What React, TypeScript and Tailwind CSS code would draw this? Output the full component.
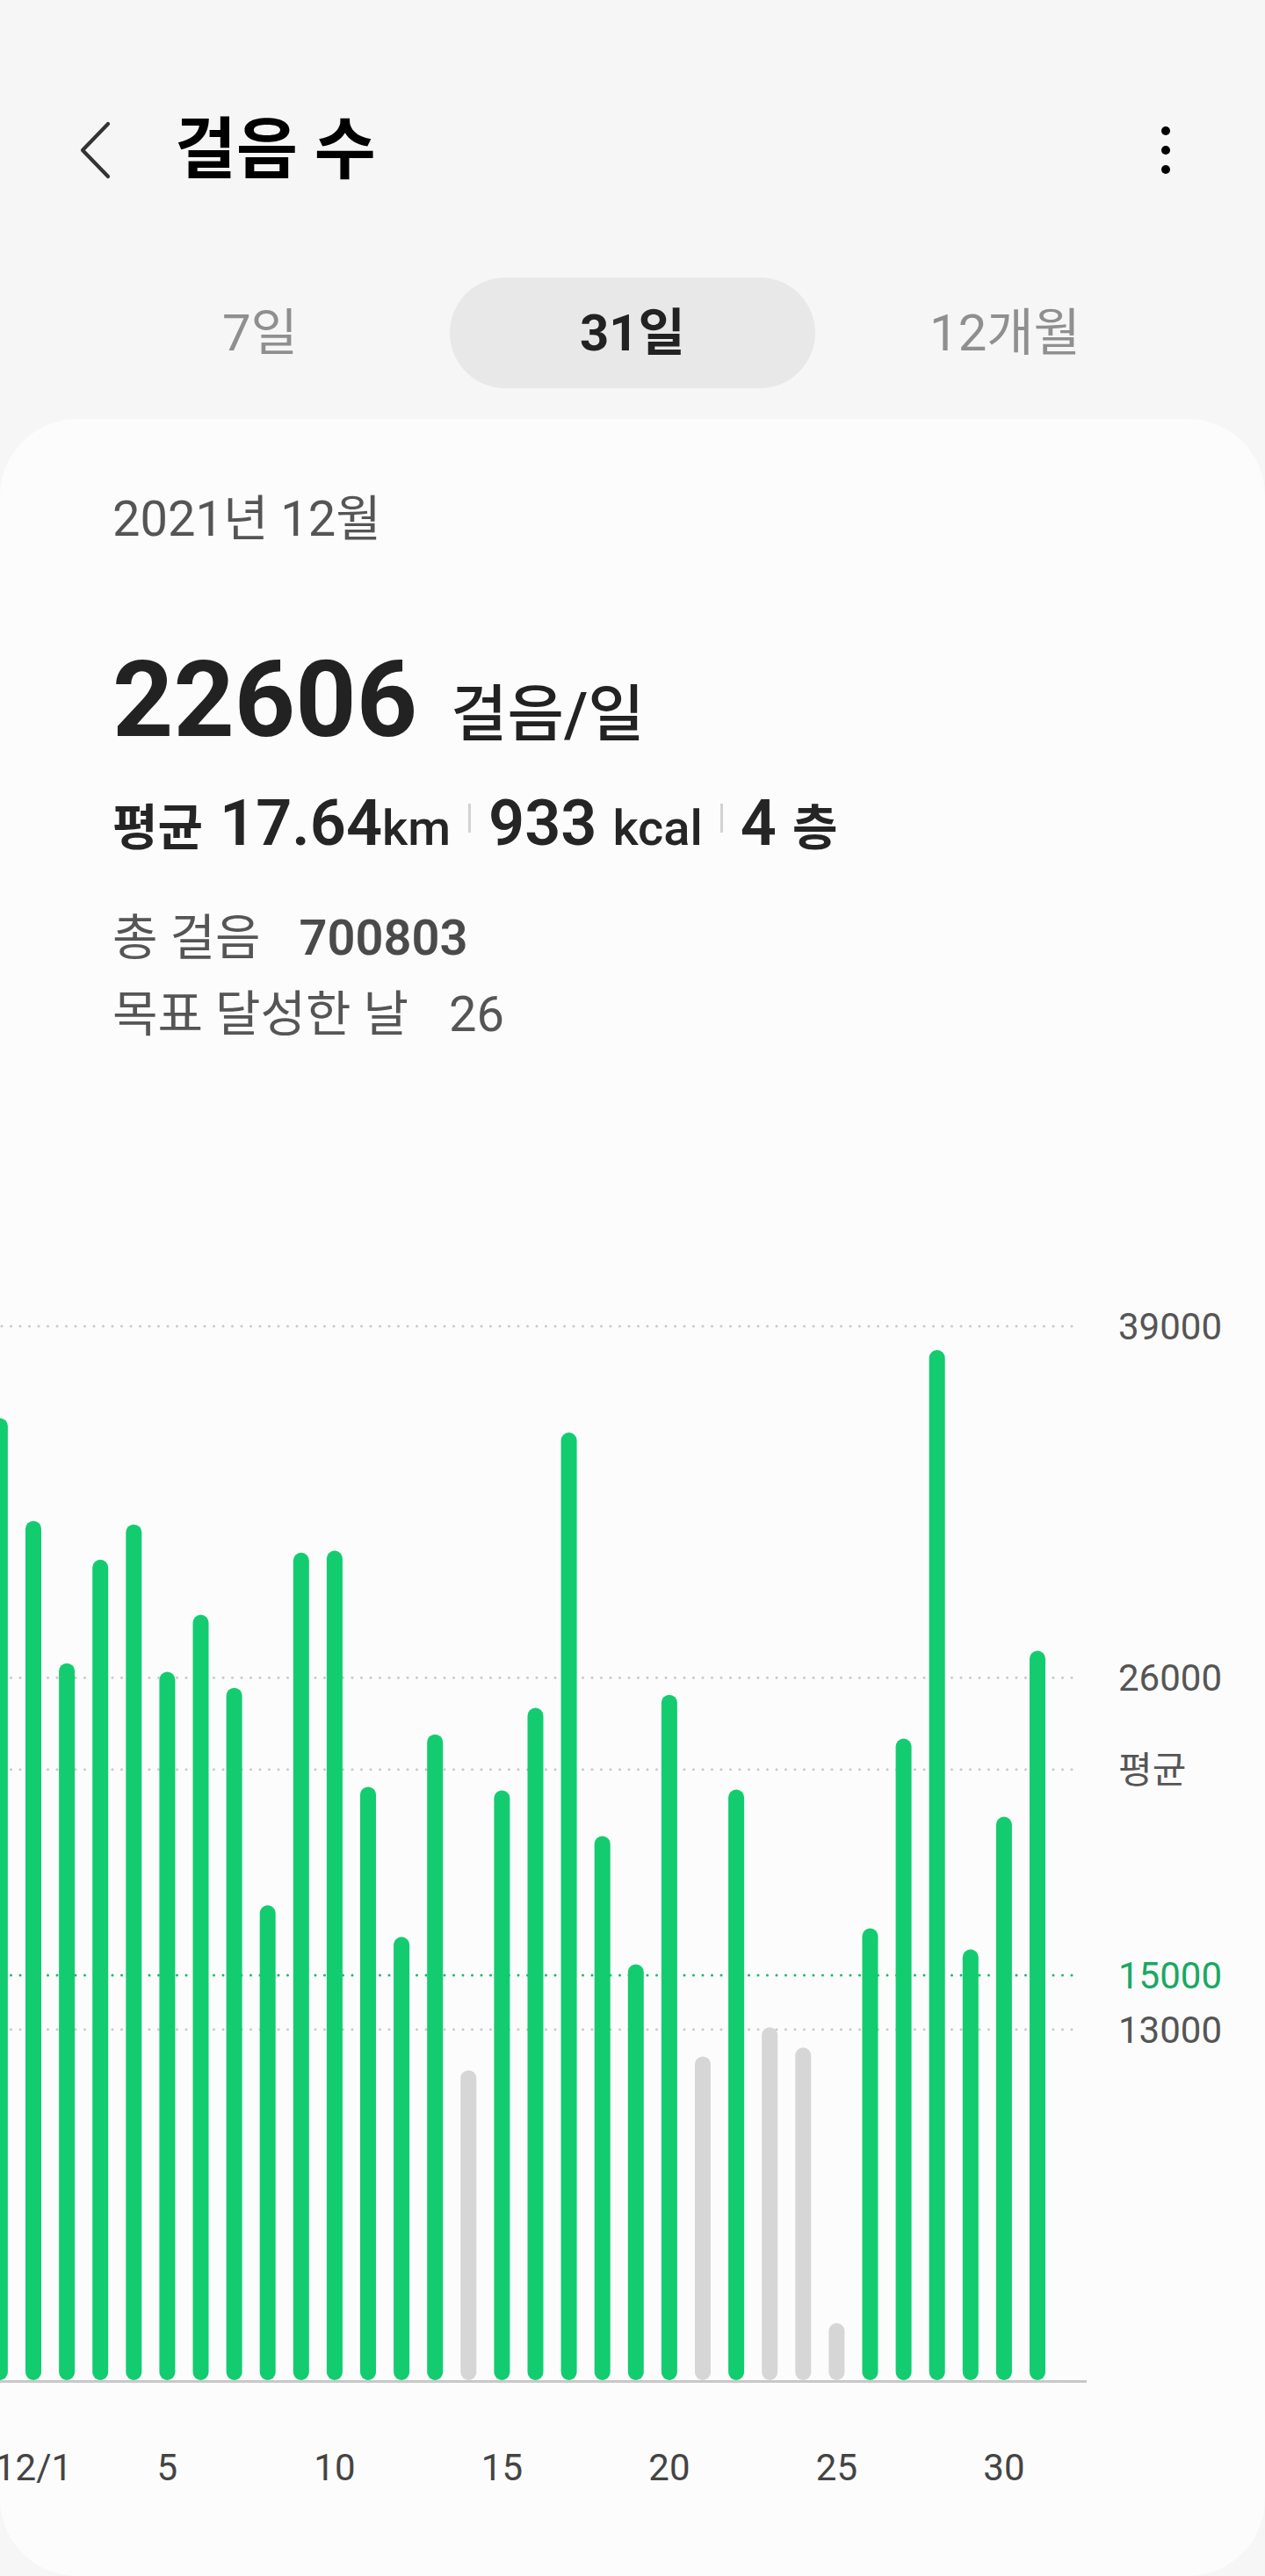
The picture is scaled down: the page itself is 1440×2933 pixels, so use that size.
// step counts, Nov 30 (cut off at the left edge) through Dec 31
const steps = [
  35600, 31800, 26540, 30370, 31670, 26220, 28330, 25630, 17590, 30630, 30700,
  21970, 16420, 23910, 11490, 21840, 24890, 35070, 20150, 15410, 25370, 12000,
  21870, 13080, 12330, 2140, 16740, 23750, 38120, 15960, 20860, 27000,
]
const GOAL = 15000
const AVG = 22606
const BASE = 1272
const PX = 1201 / 39000
const yOf = (v: number) => BASE - v * PX
const cx = (i: number) => 38.1 * i - 0.1

const guides = [
  { v: 39000, label: '39000', green: false },
  { v: 26000, label: '26000', green: false },
  { v: AVG, label: '평균', green: false },
  { v: GOAL, label: '15000', green: true },
  { v: 13000, label: '13000', green: false },
]

const xLabels = [
  { i: 1, label: '12/1' },
  { i: 5, label: '5' },
  { i: 10, label: '10' },
  { i: 15, label: '15' },
  { i: 20, label: '20' },
  { i: 25, label: '25' },
  { i: 30, label: '30' },
]

function Chart() {
  return (
    <div className="relative mt-[256px] h-[1420px]">
      <svg width="1440" height="1300" className="absolute left-0 top-0">
        {guides.map((g) => (
          <line
            key={g.label}
            x1="2"
            x2="1230"
            y1={yOf(g.v)}
            y2={yOf(g.v)}
            stroke={g.green ? '#1bb567' : '#c9c9c9'}
            strokeWidth="3"
            strokeLinecap="round"
            strokeDasharray="0 10.5"
          />
        ))}
        {steps.map((v, i) => {
          const top = yOf(v)
          return (
            <rect
              key={i}
              x={cx(i) - 9}
              y={top}
              width="18"
              height={BASE - 1 - top}
              rx="9"
              fill={v >= GOAL ? '#13cc70' : '#d6d6d6'}
            />
          )
        })}
        <rect x="0" y={BASE - 1} width="1237" height="3" fill="#c8c8c8" />
      </svg>
      {guides.map((g) => (
        <span
          key={g.label}
          className={`absolute left-[1273px] text-[42px] leading-none ${g.green ? 'text-[#1aa863]' : 'text-[#555555]'}`}
          style={{ top: yOf(g.v) - 20 }}
        >
          {g.label}
        </span>
      ))}
      {xLabels.map((l) => (
        <span
          key={l.label}
          className="absolute top-[1350px] w-[120px] text-center text-[42px] leading-none text-[#444444]"
          style={{ left: cx(l.i) - 60 }}
        >
          {l.label}
        </span>
      ))}
    </div>
  )
}

export default function App() {
  return (
    <div className="flex h-[2933px] w-[1440px] flex-col overflow-hidden bg-[#f6f6f6] font-[Roboto,'Noto_Sans_CJK_KR',sans-serif]">
      <header className="mt-[118px] flex h-[106px] items-center pl-[89px] pr-[108px]">
        <svg width="38" height="66" viewBox="0 0 38 66" fill="none" className="shrink-0">
          <path d="M34 3 L5 33 L34 63" stroke="#333333" strokeWidth="4.2" strokeLinecap="round" strokeLinejoin="round" />
        </svg>
        <h1 className="ml-[72px] text-[76px] font-bold leading-none text-black">걸음 수</h1>
        <div className="ml-auto flex flex-col gap-[12px]">
          <span className="h-[10px] w-[10px] rounded-full bg-black" />
          <span className="h-[10px] w-[10px] rounded-full bg-black" />
          <span className="h-[10px] w-[10px] rounded-full bg-black" />
        </div>
      </header>

      <nav className="mt-[92px] grid h-[126px] grid-cols-3 px-[84px] text-[58px] leading-none">
        <button className="flex items-center justify-center text-[#8f8f8f]">7일</button>
        <button className="mx-[4px] flex items-center justify-center rounded-full bg-[#e8e8e8] font-bold text-[#222222]">
          31일
        </button>
        <button className="flex items-center justify-center text-[#8f8f8f]">12개월</button>
      </nav>

      <main className="mt-[35px] flex-1 rounded-[88px] bg-[#fcfcfc] pt-[86px]">
        <div className="pl-[128px]">
          <p className="text-[56px] leading-none text-[#555555]">2021년 12월</p>
          <div className="mt-[118px] flex items-baseline leading-none text-[#222222]">
            <span className="text-[121px] font-bold">22606</span>
            <span className="ml-[38px] text-[70px] font-medium">걸음/일</span>
          </div>
          <div className="mt-[44px] flex items-baseline leading-none text-[#252525]">
            <span className="text-[56px] font-bold">평균</span>
            <span className="ml-[19px] text-[72px] font-semibold">17.64</span>
            <span className="text-[56px] font-medium">km</span>
            <span className="mx-[20px] mb-[13px] h-[33px] w-[3px] self-center bg-[#d2d2d2]" />
            <span className="text-[72px] font-semibold">933</span>
            <span className="ml-[18px] text-[56px] font-medium">kcal</span>
            <span className="mx-[20px] mb-[13px] h-[33px] w-[3px] self-center bg-[#d2d2d2]" />
            <span className="text-[72px] font-semibold">4</span>
            <span className="ml-[18px] text-[56px] font-bold">층</span>
          </div>
          <div className="mt-[66px] flex items-baseline text-[56px] leading-none text-[#555555]">
            <span>총 걸음</span>
            <span className="ml-[44px] font-semibold text-[#4a4a4a]">700803</span>
          </div>
          <div className="mt-[31px] flex items-baseline text-[56px] leading-none text-[#555555]">
            <span>목표 달성한 날</span>
            <span className="ml-[46px]">26</span>
          </div>
        </div>
        <Chart />
      </main>
    </div>
  )
}
